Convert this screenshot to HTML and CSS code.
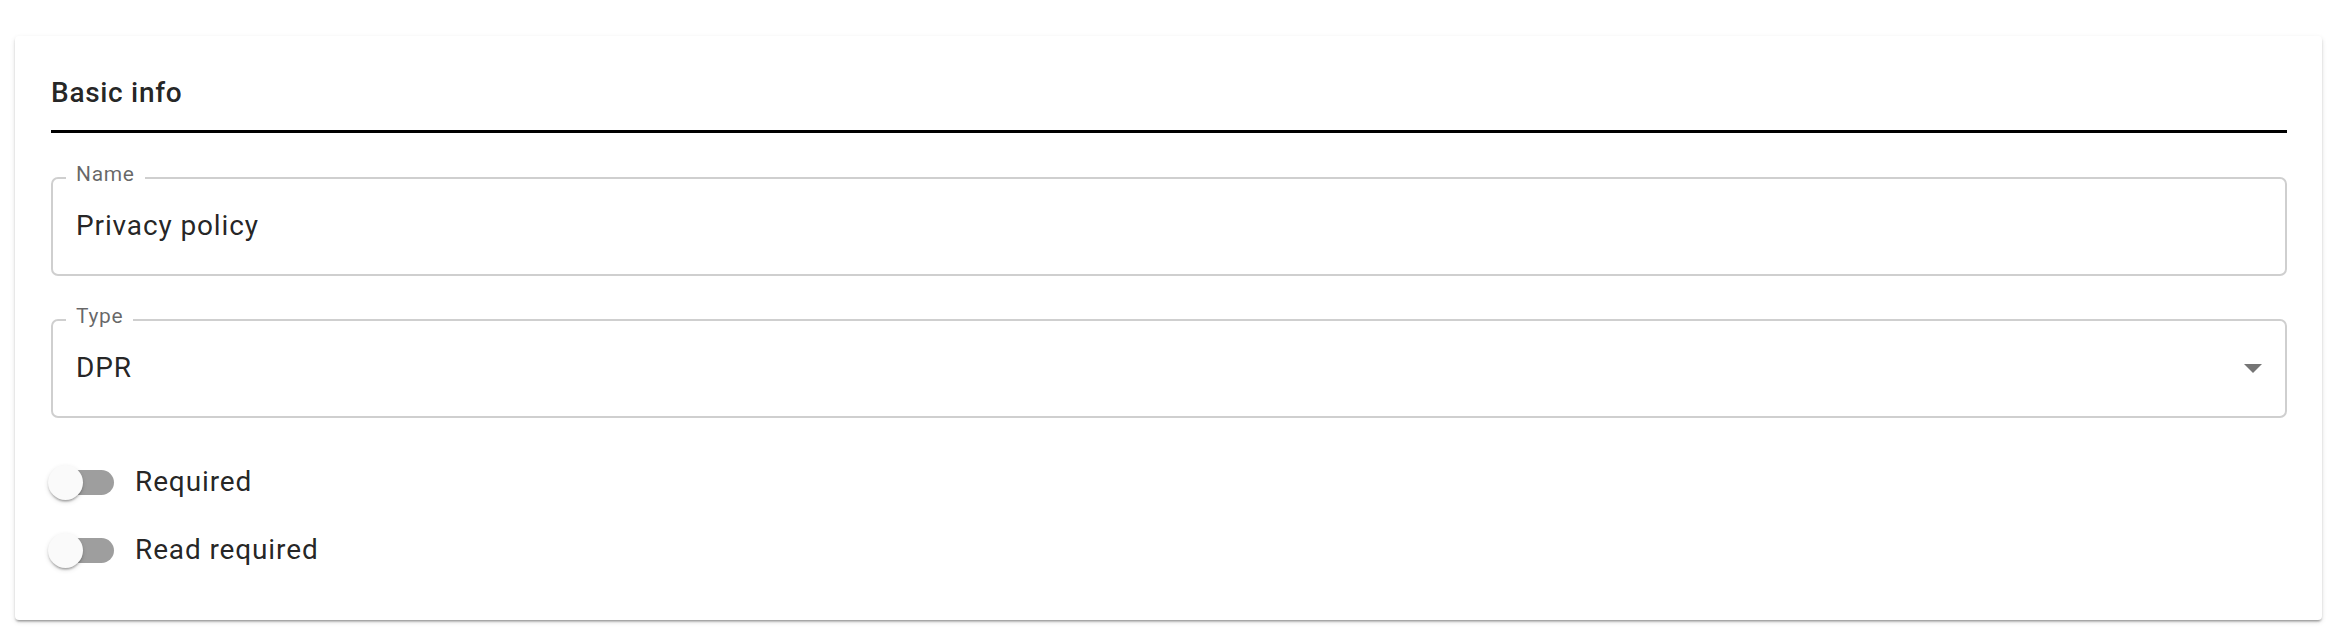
FILE: index.html
```html
<!DOCTYPE html>
<html lang="en">
<head>
<meta charset="utf-8">
<title>Basic info</title>
<link rel="stylesheet" href="styles.css">
</head>
<body>
<div class="page">
  <section class="card">
    <h2 class="card-title">Basic info</h2>
    <div class="field field-name">
      <span class="field-label">Name</span>
      <span class="field-value">Privacy policy</span>
    </div>
    <div class="field field-select">
      <span class="field-label">Type</span>
      <span class="field-value">DPR</span>
      <span class="select-arrow"></span>
    </div>
    <div class="toggles">
      <label class="toggle-row">
        <span class="toggle"><span class="toggle-thumb"></span></span>
        <span class="toggle-text">Required</span>
      </label>
      <label class="toggle-row">
        <span class="toggle"><span class="toggle-thumb"></span></span>
        <span class="toggle-text">Read required</span>
      </label>
    </div>
  </section>
</div>
</body>
</html>
```

FILE: styles.css
```css
html, body {
  margin: 0;
  background: #ffffff;
}

body {
  font-family: Roboto, "Noto Sans", "Liberation Sans", sans-serif;
  color: rgba(0, 0, 0, 0.87);
}

.page {
  padding: 36px 26px 22px 15px;
}

.card {
  background: #ffffff;
  border-radius: 4px;
  padding: 37px 35px 52px 36px;
  box-shadow: 0 3px 2px -2px rgba(0, 0, 0, 0.22),
              0 2px 2px 0 rgba(0, 0, 0, 0.15),
              0 2px 5px 0 rgba(0, 0, 0, 0.12);
}

.card-title {
  margin: 0;
  font-size: 28px;
  font-weight: 500;
  line-height: 40px;
  letter-spacing: 0.7px;
  padding-bottom: 17px;
  border-bottom: 3px solid #000000;
}

.field {
  position: relative;
  display: flex;
  align-items: center;
  border: 2px solid #cfcfcf;
  border-radius: 7px;
  padding: 30px 23px 31px 23px;
  margin-top: 44px;
}

.field + .field {
  margin-top: 43px;
}

.field-label {
  position: absolute;
  top: -17px;
  left: 13px;
  padding: 0 10px;
  background: #ffffff;
  font-size: 21px;
  line-height: 24px;
  letter-spacing: 0.65px;
  color: rgba(0, 0, 0, 0.6);
}

.field-value {
  flex: 1;
  font-size: 28px;
  line-height: 34px;
  letter-spacing: 0.875px;
}

.select-arrow {
  width: 0;
  height: 0;
  border-left: 9px solid transparent;
  border-right: 9px solid transparent;
  border-top: 9px solid rgba(0, 0, 0, 0.54);
}

.toggles {
  margin-top: 46px;
  display: flex;
  flex-direction: column;
  gap: 32px;
}

.toggle-row {
  display: flex;
  align-items: center;
  height: 36px;
  gap: 21px;
}

.toggle {
  position: relative;
  flex: none;
  width: 63px;
  height: 25px;
  border-radius: 12.5px;
  background: rgba(0, 0, 0, 0.38);
}

.toggle-thumb {
  position: absolute;
  left: -3px;
  top: -5px;
  width: 35px;
  height: 35px;
  border-radius: 50%;
  background: #fafafa;
  box-shadow: 0 3px 2px -2px rgba(0, 0, 0, 0.2),
              0 2px 2px 0 rgba(0, 0, 0, 0.14),
              0 2px 5px 0 rgba(0, 0, 0, 0.12);
}

.toggle-text {
  font-size: 28px;
  line-height: 36px;
  letter-spacing: 0.875px;
}
```
